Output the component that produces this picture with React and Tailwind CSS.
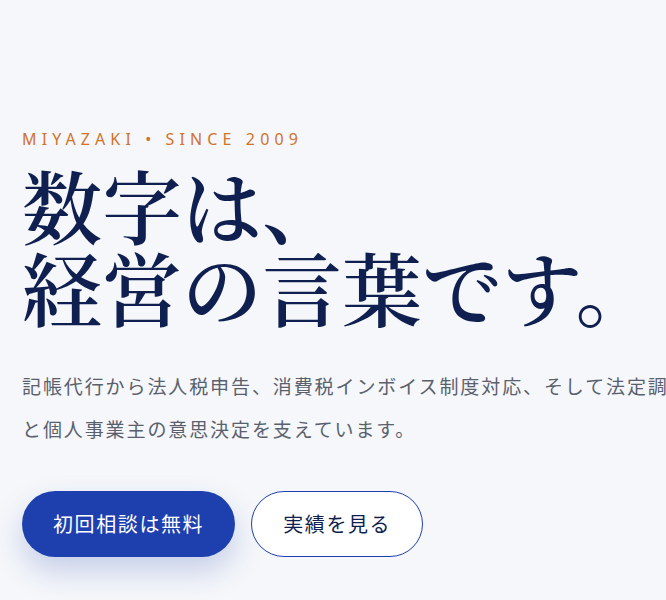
import React from 'react'

export default function App() {
  return (
    <div className="min-h-screen w-full overflow-hidden bg-[#f5f7fa]">
      <section className="pl-[22px] pt-[129px] pb-16">
        {/* eyebrow */}
        <p className="text-[16px] leading-[20px] tracking-[0.32em] text-[#d0732b] font-['Noto_Sans','Noto_Sans_CJK_JP',sans-serif] whitespace-nowrap">
          MIYAZAKI • SINCE 2009
        </p>

        <h1 className="mt-[14px] text-[80px] leading-[82px] font-semibold text-[#0f1f4f] whitespace-nowrap font-['Noto_Serif_CJK_JP','Noto_Serif_JP','Noto_Sans_CJK_JP',serif]">
          数字は、
          <br />
          経営の言葉です。
        </h1>

        <p className="mt-[37px] whitespace-nowrap text-[19px] leading-[43px] tracking-[0.1em] text-[#5a616d] font-['Noto_Sans_CJK_JP',sans-serif]">
          記帳代行から法人税申告、消費税インボイス制度対応、そして法定調書の作成まで、宮崎の中小企業
          <br />
          と個人事業主の意思決定を支えています。
        </p>

        <div className="mt-[41px] flex items-center gap-4 font-['Noto_Sans_CJK_JP',sans-serif]">
          <button className="h-[66px] rounded-full bg-[#1e40af] px-[31px] text-[20px] tracking-[0.08em] text-white shadow-[0_14px_30px_rgba(30,64,175,0.22)]">
            初回相談は無料
          </button>
          <button className="h-[66px] rounded-full border-[1.5px] border-[#1e40af] bg-white px-[31px] text-[20px] tracking-[0.08em] text-[#0f1f4f]">
            実績を見る
          </button>
        </div>
      </section>
    </div>
  )
}
